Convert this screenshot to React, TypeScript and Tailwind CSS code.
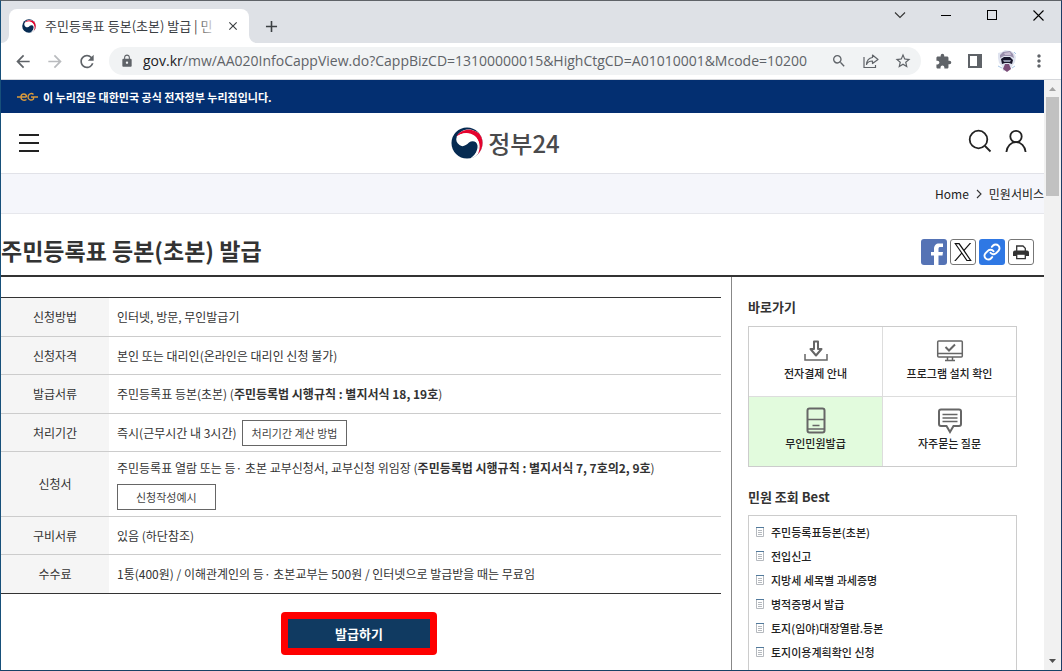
import type { ReactNode } from "react";
import {
  MdArrowBack,
  MdArrowForward,
  MdRefresh,
  MdLock,
  MdSearch,
  MdStarBorder,
  MdExtension,
  MdMoreVert,
  MdClose,
  MdAdd,
} from "react-icons/md";

function Emblem({ size, id }: { size: number; id: string }) {
  return (
    <svg width={size} height={size} viewBox="0 0 32 32" aria-hidden="true">
      <defs>
        <clipPath id={id}>
          <circle cx="16" cy="16" r="15.5" />
        </clipPath>
      </defs>
      <g clipPath={`url(#${id})`}>
        <rect width="32" height="32" fill="#062b52" />
        <path d="M5.500 10C9 2.500 18 .5 25 4.500L29 6.500L34 14V30L24 32L20 31C29 25 29 17 25 12Z" fill="#fff" />
        <path d="M5.500 9.500C9 3 18 .8 25 4.500L28.500 6.500L33 12V26L25 30.500C29.500 24 30 16 25.500 11C20 5.500 11 5 5.500 9.500Z" fill="#e4032e" />
        <path d="M5.500 10.500C9 5.500 18 4 24 9C29.500 14 29.500 24 23 31L19 32C24 28.500 27 23 26.500 18.500C26 14.500 21.500 13 18 15.500C15 18.500 11.500 20.500 8.500 18C5.500 16 4.800 13 5.500 10.500Z" fill="#fff" />
      </g>
    </svg>
  );
}

function IconButton({ label, children }: { label: string; children: ReactNode }) {
  return (
    <button type="button" aria-label={label} className="flex size-5 shrink-0 items-center justify-center text-[#5f6368]">
      {children}
    </button>
  );
}

function TabStrip() {
  return (
    <div className="flex h-[42px] shrink-0 items-start bg-[#dee1e6]">
      <div className="flex items-end self-stretch">
        <svg width="8" height="8" viewBox="0 0 8 8" aria-hidden="true">
          <path d="M8 0A8 8 0 0 1 0 8H8Z" fill="#fff" />
        </svg>
        <div className="flex h-[34px] w-60 items-center rounded-t-lg bg-white pr-2 pl-[13px]">
          <Emblem size={14} id="tab-emblem" />
          <div className="relative ml-[9px] flex-1 overflow-hidden text-[13px] leading-5 whitespace-nowrap text-[#3c4043]">
            주민등록표 등본(초본) 발급 | 민
            <span className="absolute inset-y-0 right-0 w-5 bg-linear-to-r from-transparent to-white" />
          </div>
          <button type="button" aria-label="탭 닫기" className="ml-2 flex size-4 items-center justify-center text-[#3c4043]">
            <MdClose size={14} />
          </button>
        </div>
        <svg width="8" height="8" viewBox="0 0 8 8" aria-hidden="true">
          <path d="M0 0A8 8 0 0 0 8 8H0Z" fill="#fff" />
        </svg>
      </div>
      <button type="button" aria-label="새 탭" className="mt-[15px] ml-1 flex size-5 items-center justify-center text-[#3c4043]">
        <MdAdd size={19} />
      </button>
      <div className="ml-auto flex text-black">
        <button type="button" aria-label="탭 검색" className="flex h-7 w-[46px] items-center justify-center">
          <svg width="12" height="8" viewBox="0 0 12 8" fill="none" stroke="#333" strokeWidth="1.100">
            <path d="M1 1.500 6 6.500 11 1.500" />
          </svg>
        </button>
        <button type="button" aria-label="최소화" className="flex h-7 w-[46px] items-center justify-center">
          <span className="h-px w-[10px] bg-black" />
        </button>
        <button type="button" aria-label="최대화" className="flex h-7 w-[46px] items-center justify-center">
          <span className="size-[10px] border border-black" />
        </button>
        <button type="button" aria-label="닫기" className="flex h-7 w-[46px] items-center justify-center">
          <svg width="11" height="11" viewBox="0 0 11 11" fill="none" stroke="#000" strokeWidth="1.100">
            <path d="M.5.5l10 10M10.500.5l-10 10" />
          </svg>
        </button>
      </div>
    </div>
  );
}

function Avatar() {
  return (
    <svg width="20" height="22" viewBox="0 0 20 22" aria-hidden="true">
      <path d="M1 3 5 2 8 0 14 1 17 3 19 7 18 12 16 15 13 20 6 21 5 16 2 13 1 8Z" fill="#dfe3ef" />
      <path d="M3 5 6 2 13 1 16 4 17 8 13 6 7 6 3 8Z" fill="#9a90ad" />
      <path d="M7 3 13 2 14 5 8 5Z" fill="#c9bdd2" />
      <path d="M4 9 7 7 13 7 16 10 15 14 12 13 8 13 5 14Z" fill="#17152a" />
      <path d="M6 10H14L13 12H7Z" fill="#8e93a8" />
      <path d="M8 14H12L14 19 10 22 6 19Z" fill="#7b4d78" />
      <path d="M1 16 5 18M15 18 18 16M17 2 19 4" stroke="#a9c6e6" />
    </svg>
  );
}

function Toolbar() {
  return (
    <div className="flex h-[37px] shrink-0 items-center gap-3 border-b border-[#d5d7db] bg-white px-3">
      <IconButton label="뒤로"><MdArrowBack size={21} /></IconButton>
      <button type="button" disabled aria-label="앞으로" className="flex size-5 items-center justify-center text-[#b9bbbe]">
        <MdArrowForward size={21} />
      </button>
      <IconButton label="새로고침"><MdRefresh size={21} /></IconButton>
      <div className="flex h-7 min-w-0 flex-1 items-center rounded-full bg-[#f1f3f4] pr-2 pl-[11px]">
        <MdLock size={14} className="shrink-0 text-[#5f6368]" />
        <a href="#top" className="ml-[9px] min-w-0 flex-1 overflow-hidden font-['Open_Sans',sans-serif] text-sm leading-5 whitespace-nowrap text-[#5f6368]">
          <span className="text-[#202124]">gov.kr</span>/mw/AA020InfoCappView.do?CappBizCD=13100000015&amp;HighCtgCD=A01010001&amp;Mcode=10200
        </a>
        <div className="flex gap-3">
          <IconButton label="확대/축소"><MdSearch size={16} /></IconButton>
          <IconButton label="공유">
            <svg width="16" height="16" viewBox="0 0 16 16" fill="none" stroke="currentColor" strokeWidth="1.200">
              <path d="M1 4v10.500h11.500V12" />
              <path d="M9.500 2 15 6.500 9.500 10.500V8C6.500 8 4.500 9 3.500 11.500 3.800 7.500 6 5 9.500 4.500Z" strokeLinejoin="round" />
            </svg>
          </IconButton>
          <IconButton label="북마크"><MdStarBorder size={18} /></IconButton>
        </div>
      </div>
      <IconButton label="확장 프로그램"><MdExtension size={17} /></IconButton>
      <IconButton label="사이드 패널">
        <svg width="14" height="14" viewBox="0 0 14 14">
          <path d="M0 0H14V14H0ZM2 2V12H9V2Z" fill="currentColor" fillRule="evenodd" />
        </svg>
      </IconButton>
      <IconButton label="프로필"><Avatar /></IconButton>
      <IconButton label="메뉴"><MdMoreVert size={20} /></IconButton>
    </div>
  );
}

function OfficialBar() {
  return (
    <div className="flex h-[33px] shrink-0 items-center gap-[5px] bg-[#032f71] pl-4 text-[11px] leading-4 font-bold text-white">
      <svg width="21" height="10" viewBox="0 0 21 10" fill="none" stroke="#d99a3d" strokeWidth="1.400" aria-hidden="true">
        <path d="M0 5H9.500M9.500 5C9.500 1 4 1 4 5S8 8.500 9.500 7.500" />
        <path d="M16.500 2.500C14.500 .5 11 2 11 5S14.500 9 16.500 7V5H14M16.500 5H21" />
      </svg>
      <p>이 누리집은 대한민국 공식 전자정부 누리집입니다.</p>
    </div>
  );
}

function SiteHeader() {
  return (
    <header className="grid h-[61px] shrink-0 grid-cols-[1fr_auto_1fr] items-center border-b border-[#e1e2e8] pr-4 pl-[18px]">
      <button type="button" aria-label="전체 메뉴" className="flex w-5 flex-col gap-[6px]">
        <span className="h-[2px] w-full bg-[#222]" />
        <span className="h-[2px] w-full bg-[#222]" />
        <span className="h-[2px] w-full bg-[#222]" />
      </button>
      <a href="#home" className="mr-9 flex items-center gap-[5px] text-2xl leading-8 font-medium text-[#4a4a4c]">
        <Emblem size={32} id="site-emblem" />
        정부24
      </a>
      <div className="flex items-center justify-end gap-3 pb-1">
        <button type="button" aria-label="검색">
          <svg width="24" height="24" viewBox="0 0 24 24" fill="none" stroke="#222" strokeWidth="1.800">
            <circle cx="10.500" cy="10.500" r="8.800" />
            <path d="M17 17 22.500 22.500" />
          </svg>
        </button>
        <button type="button" aria-label="로그인">
          <svg width="24" height="24" viewBox="0 0 24 24" fill="none" stroke="#222" strokeWidth="1.800">
            <circle cx="12" cy="7.500" r="5.700" />
            <path d="M2.400 23C3 17 7 13.200 12 13.200S21 17 21.600 23" />
          </svg>
        </button>
      </div>
    </header>
  );
}

function Breadcrumb() {
  return (
    <nav aria-label="현재 위치" className="flex h-10 shrink-0 items-center justify-end gap-[7px] border-b border-[#e6e7ec] bg-[#f5f6fb] text-xs leading-4 text-[#222]">
      <a href="#home">Home</a>
      <svg width="6" height="10" viewBox="0 0 6 10" fill="none" stroke="#333" strokeWidth="1.100" aria-hidden="true">
        <path d="M1 1 5 5 1 9" />
      </svg>
      <a href="#service">민원서비스</a>
    </nav>
  );
}

function TitleBar() {
  return (
    <div className="flex h-[63px] shrink-0 items-center justify-between border-b-2 border-[#333] pr-[10px]">
      <h1 className="pt-[10px] text-[23px] leading-8 font-bold text-[#333]">주민등록표 등본(초본) 발급</h1>
      <div className="flex gap-[3px] pt-[15px]">
        <a href="#facebook" aria-label="페이스북" className="block size-[26px] overflow-hidden rounded-[3px] bg-[#5573b5]">
          <svg width="26" height="26" viewBox="0 0 26 26">
            <path d="M13 26V16.500H10V13H13V10C13 6.500 15 4.500 18 4.500H22V8H19.500C18 8 17.500 8.500 17.500 10V13H22L21.500 16.500H17.500V26Z" fill="#fff" />
          </svg>
        </a>
        <a href="#x" aria-label="X" className="flex size-[26px] items-center justify-center rounded-[3px] border border-[#777] bg-white">
          <svg width="18" height="18" viewBox="0 0 24 24">
            <path d="M14.234 10.162 22.977 0h-2.072l-7.591 8.824L7.251 0H.258l9.168 13.343L.258 24H2.330l8.016-9.318L16.749 24h6.993zM3.076 1.560h3.182l14.650 20.957h-3.182z" fill="#111" />
          </svg>
        </a>
        <a href="#link" aria-label="주소 복사" className="flex size-[26px] items-center justify-center rounded-[3px] bg-[#2f78e4]">
          <svg width="18" height="18" viewBox="0 0 24 24" fill="none" stroke="#fff" strokeWidth="2.700" strokeLinecap="round" strokeLinejoin="round">
            <path d="M10 13a5 5 0 0 0 7.540.54l3-3a5 5 0 0 0-7.070-7.070l-1.720 1.710" />
            <path d="M14 11a5 5 0 0 0-7.540-.54l-3 3a5 5 0 0 0 7.070 7.070l1.710-1.710" />
          </svg>
        </a>
        <button type="button" aria-label="인쇄" className="flex size-[26px] items-center justify-center rounded-[3px] border border-[#777] bg-white">
          <svg width="16" height="15" viewBox="0 0 16 15">
            <path d="M3.700 6V1H10L12.300 3.300V6" fill="#fff" stroke="#333" strokeWidth="1.300" />
            <path d="M2 5.500H14A2 2 0 0 1 16 7.500V11H0V7.500A2 2 0 0 1 2 5.500Z" fill="#333" />
            <path d="M3.700 9.200H12.300V13.700H3.700Z" fill="#fff" stroke="#333" strokeWidth="1.300" />
          </svg>
        </button>
      </div>
    </div>
  );
}

function OutlineButton({ wide, children }: { wide?: boolean; children: ReactNode }) {
  return (
    <button
      type="button"
      className={`${wide ? "px-[18px]" : "px-[9px]"} h-[26px] border border-[#666] bg-white text-[11px] leading-4 text-[#444]`}
    >
      {children}
    </button>
  );
}

const rows: { label: string; value: ReactNode }[] = [
  { label: "신청방법", value: "인터넷, 방문, 무인발급기" },
  { label: "신청자격", value: "본인 또는 대리인(온라인은 대리인 신청 불가)" },
  { label: "발급서류", value: <>주민등록표 등본(초본) (<b>주민등록법 시행규칙 : 별지서식 18, 19호</b>)</> },
  {
    label: "처리기간",
    value: (
      <div className="flex items-center gap-[5px]">
        즉시(근무시간 내 3시간)
        <OutlineButton>처리기간 계산 방법</OutlineButton>
      </div>
    ),
  },
  {
    label: "신청서",
    value: (
      <div className="flex flex-col items-start gap-2 pt-2 pb-[6px]">
        <p>주민등록표 열람 또는 등· 초본 교부신청서, 교부신청 위임장 (<b>주민등록법 시행규칙 : 별지서식 7, 7호의2, 9호</b>)</p>
        <OutlineButton wide>신청작성예시</OutlineButton>
      </div>
    ),
  },
  { label: "구비서류", value: "있음 (하단참조)" },
  { label: "수수료", value: "1통(400원) / 이해관계인의 등· 초본교부는 500원 / 인터넷으로 발급받을 때는 무료임" },
];

function ServiceInfo() {
  return (
    <main className="min-w-0 flex-1 pt-5 pr-[10px]">
      <table className="w-full border-collapse border-y border-[#333] text-xs leading-4 text-[#333]">
        <tbody>
          {rows.map((row) => (
            <tr key={row.label} className="border-b border-[#ccc] last:border-[#333] odd:h-[39px] even:h-[38px]">
              <th scope="row" className="w-[108px] bg-[#f5f5f5] font-normal">{row.label}</th>
              <td className="pl-2">{row.value}</td>
            </tr>
          ))}
        </tbody>
      </table>
      <div className="flex justify-center pt-[18px] pr-1">
        <span className="flex rounded-[4px] bg-[#fe0000] p-[7px]">
          <button type="button" className="h-[29px] w-[142px] bg-[#103a61] text-[13px] leading-5 font-bold text-white">
            발급하기
          </button>
        </span>
      </div>
    </main>
  );
}

const shortcuts: { label: string; active?: boolean; icon: ReactNode }[] = [
  {
    label: "전자결제 안내",
    icon: (
      <>
        <path d="M12 4.500H16V12H19.500L14 18.500 8.500 12H12Z" strokeLinejoin="round" />
        <path d="M3 17V23H25V17" strokeWidth="1.500" />
      </>
    ),
  },
  {
    label: "프로그램 설치 확인",
    icon: (
      <>
        <rect x="1.700" y="4" width="24.600" height="16" rx="1" strokeWidth="1.500" />
        <path d="M2 16.500H26M11.500 20V23M16.500 20V23M9 23.500H19" strokeWidth="1.500" />
        <path d="M9.500 10 13 13.500 19 7.500" />
      </>
    ),
  },
  {
    label: "무인민원발급",
    active: true,
    icon: (
      <>
        <rect x="5.500" y="1.500" width="17" height="24" rx="2" />
        <path d="M5.500 12.500H22.500M5.500 22H22.500M10.500 18.500H17.500" strokeWidth="1.500" />
      </>
    ),
  },
  {
    label: "자주묻는 질문",
    icon: (
      <>
        <path d="M5 2.500H23Q25 2.500 25 4.500V17Q25 19 23 19H17.500L14 25 10.500 19H5Q3 19 3 17V4.500Q3 2.500 5 2.500Z" />
        <path d="M6.500 7.500H21.500M6.500 11H21.500M6.500 14.500H21.500" strokeWidth="1.600" />
      </>
    ),
  },
];

const best = ["주민등록표등본(초본)", "전입신고", "지방세 세목별 과세증명", "병적증명서 발급", "토지(임야)대장열람.등본", "토지이용계획확인 신청", "건축물대장 등.초본 발급"];

function Sidebar() {
  return (
    <aside className="w-[313px] shrink-0 border-l border-[#888] pt-5 pr-[27px] pl-4 text-[#222]">
      <h2 className="text-[13px] leading-5 font-bold text-[#333]">바로가기</h2>
      <ul className="mt-[9px] grid grid-cols-2 gap-px border border-[#ccc] bg-[#ddd]">
        {shortcuts.map((item) => (
          <li key={item.label} className={item.active ? "bg-[#e2fbdd]" : "bg-white"}>
            <a href="#shortcut" className="flex h-[69px] flex-col items-center pt-[10px] text-[11px] leading-4 font-medium">
              <svg width="28" height="28" viewBox="0 0 28 28" fill="none" stroke="#666" strokeWidth="2" aria-hidden="true">
                {item.icon}
              </svg>
              {item.label}
            </a>
          </li>
        ))}
      </ul>
      <h2 className="mt-5 text-[13px] leading-5 font-bold text-[#333]">민원 조회 Best</h2>
      <ul className="mt-2 border border-[#ccc] pt-1 pl-[7px]">
        {best.map((item) => (
          <li key={item}>
            <a href="#best" className="flex h-6 items-center gap-[7px] text-[11px] leading-4 font-medium">
              <svg width="8" height="10" viewBox="0 0 8 10" fill="none" className="shrink-0" aria-hidden="true">
                <path d="M.5 0V9.500H7.500V0" stroke="#b5b9be" />
                <path d="M0 .5H8" stroke="#527a9c" />
                <path d="M2 3.500H6M2 5.500H6M2 7.500H6" stroke="#b5b9be" />
              </svg>
              {item}
            </a>
          </li>
        ))}
      </ul>
    </aside>
  );
}

function ScrollTrack() {
  return (
    <div className="flex w-[17px] shrink-0 flex-col items-center justify-between bg-[#f1f1f1]" aria-hidden="true">
      <div className="flex flex-col items-center">
        <svg width="17" height="17" viewBox="0 0 17 17"><path d="M5 11H12L8.500 7Z" fill="#a3a3a3" /></svg>
        <div className="h-[99px] w-[13px] bg-[#c1c1c1]" />
      </div>
      <svg width="17" height="17" viewBox="0 0 17 17"><path d="M5 6H12L8.500 10Z" fill="#505050" /></svg>
    </div>
  );
}

export default function App() {
  return (
    <div className="flex h-screen flex-col overflow-hidden border border-t-[#5f6368] border-r-[#1d3d66] border-b-[#174266] border-l-[#17507a] bg-white font-['Noto_Sans_CJK_KR',sans-serif]">
      <TabStrip />
      <Toolbar />
      <div className="flex min-h-0 flex-1">
        <div className="flex min-w-0 flex-1 flex-col overflow-hidden">
          <OfficialBar />
          <SiteHeader />
          <Breadcrumb />
          <TitleBar />
          <div className="flex shrink-0">
            <ServiceInfo />
            <Sidebar />
          </div>
        </div>
        <ScrollTrack />
      </div>
    </div>
  );
}
